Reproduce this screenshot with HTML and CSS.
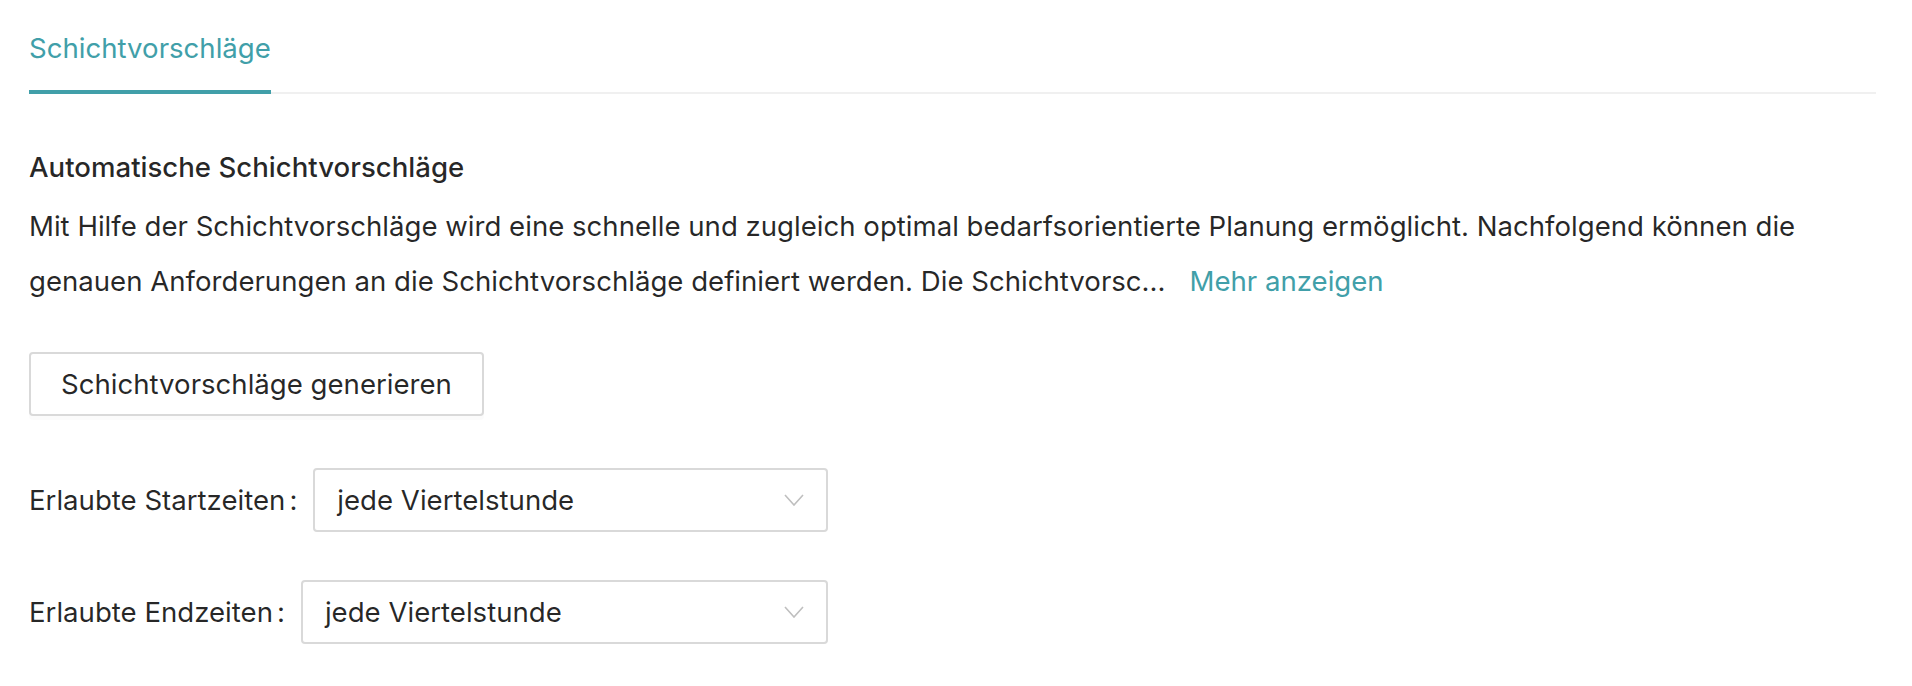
FILE: index.html
```html
<!DOCTYPE html>
<html lang="de">
<head>
<meta charset="utf-8">
<title>Schichtvorschläge</title>
<link rel="stylesheet" href="styles.css">
</head>
<body>
<div class="page">
  <div class="tabs-nav">
    <div class="tab tab-active">Schichtvorschläge</div>
  </div>
  <div class="content">
    <div class="section-title">Automatische Schichtvorschläge</div>
    <div class="description">
      <div class="desc-line">Mit Hilfe der Schichtvorschläge wird eine schnelle und zugleich optimal bedarfsorientierte Planung ermöglicht. Nachfolgend können die</div>
      <div class="desc-line"><span class="desc-text">genauen Anforderungen an die Schichtvorschläge definiert werden. Die Schichtvorsc...</span><a class="more-link" href="#">Mehr anzeigen</a></div>
    </div>
    <button class="btn" type="button">Schichtvorschläge generieren</button>
    <div class="form">
      <div class="form-row">
        <label class="form-label">Erlaubte Startzeiten<span class="colon">:</span></label>
        <div class="select">
          <span class="select-value">jede Viertelstunde</span>
          <svg class="chevron" width="20" height="12" viewBox="0 0 20 12"><polyline points="1,1 10,11 19,1" fill="none" stroke="#bfbfbf" stroke-width="1.6"/></svg>
        </div>
      </div>
      <div class="form-row">
        <label class="form-label">Erlaubte Endzeiten<span class="colon">:</span></label>
        <div class="select">
          <span class="select-value">jede Viertelstunde</span>
          <svg class="chevron" width="20" height="12" viewBox="0 0 20 12"><polyline points="1,1 10,11 19,1" fill="none" stroke="#bfbfbf" stroke-width="1.6"/></svg>
        </div>
      </div>
    </div>
  </div>
</div>
</body>
</html>
```
FILE: styles.css
```css
html, body {
  margin: 0;
  padding: 0;
  background: #ffffff;
}
body {
  font-family: "Inter", "Liberation Sans", sans-serif;
  font-size: 27.6px;
  color: rgba(0, 0, 0, 0.85);
}
.page {
  padding: 2px 36px 0 29px;
}
.tabs-nav {
  display: flex;
  border-bottom: 2px solid #f0f0f0;
}
.tab {
  padding: 24px 0 20px 0;
  line-height: 44px;
  margin-bottom: -2px;
  color: #419fa9;
  border-bottom: 4px solid transparent;
}
.tab-active {
  border-bottom-color: #419fa9;
}
.content {
  padding-top: 51px;
}
.section-title {
  font-weight: 500;
  line-height: 44px;
}
.description {
  margin-top: 10px;
  line-height: 55px;
}
.desc-line {
  white-space: nowrap;
}
.more-link {
  color: #419fa9;
  text-decoration: none;
  margin-left: 24px;
}
.btn {
  display: block;
  margin-top: 43px;
  height: 64px;
  padding: 0 30px;
  font-family: inherit;
  font-size: 27.6px;
  color: rgba(0, 0, 0, 0.85);
  background: #ffffff;
  border: 2px solid #d9d9d9;
  border-radius: 4px;
  box-shadow: 0 4px 0 rgba(0, 0, 0, 0.015);
}
.form {
  margin-top: 52px;
  display: flex;
  flex-direction: column;
  gap: 48px;
}
.form-row {
  display: flex;
  align-items: center;
  width: 799px;
}
.form-label {
  flex: none;
  white-space: nowrap;
}
.colon {
  margin-left: 4px;
  margin-right: 16px;
}
.select {
  flex: 1;
  height: 64px;
  box-sizing: border-box;
  border: 2px solid #d9d9d9;
  border-radius: 4px;
  display: flex;
  align-items: center;
  justify-content: space-between;
  padding: 0 22px 0 22px;
}
.chevron {
  display: block;
}
```
